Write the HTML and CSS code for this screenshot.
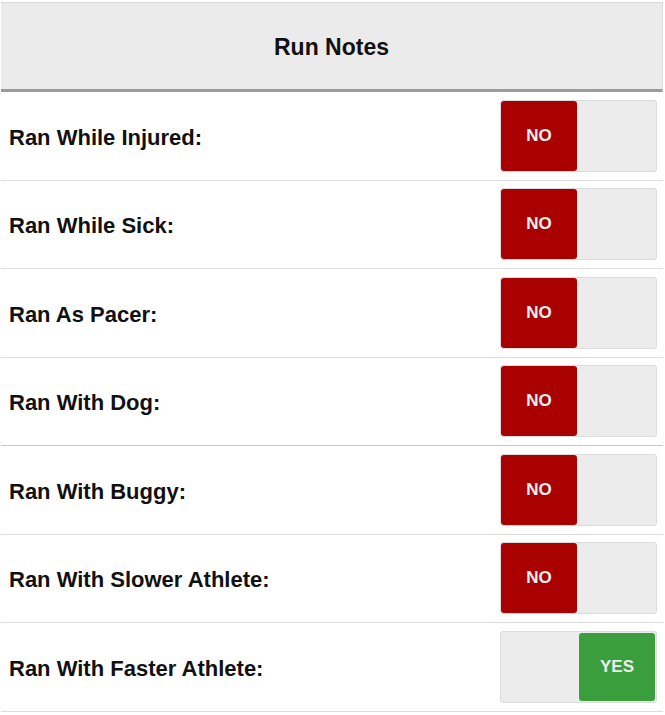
FILE: index.html
```html
<!DOCTYPE html>
<html>
<head>
<meta charset="utf-8">
<link rel="stylesheet" href="styles.css">
</head>
<body>
<div class="page">
  <div class="header">Run Notes</div>
  <div class="row"><span class="label">Ran While Injured:</span><div class="switch"><div class="knob no">NO</div></div></div>
  <div class="row"><span class="label">Ran While Sick:</span><div class="switch"><div class="knob no">NO</div></div></div>
  <div class="row"><span class="label">Ran As Pacer:</span><div class="switch"><div class="knob no">NO</div></div></div>
  <div class="row dark"><span class="label">Ran With Dog:</span><div class="switch"><div class="knob no">NO</div></div></div>
  <div class="row"><span class="label">Ran With Buggy:</span><div class="switch"><div class="knob no">NO</div></div></div>
  <div class="row"><span class="label">Ran With Slower Athlete:</span><div class="switch"><div class="knob no">NO</div></div></div>
  <div class="row"><span class="label">Ran With Faster Athlete:</span><div class="switch on"><div class="knob yes">YES</div></div></div>
</div>
</body>
</html>
```
FILE: styles.css
```css
html, body {
  margin: 0;
  padding: 0;
  background: #fff;
}
body {
  font-family: "Liberation Sans", Arial, sans-serif;
}
.page {
  margin: 2px 2px 0 1px;
}
.header {
  height: 90px;
  box-sizing: border-box;
  padding-top: 3px;
  background: #ebebeb;
  border-top: 1px solid #dadada;
  border-right: 1px solid #dadada;
  border-bottom: 3px solid #9a9a9a;
  display: flex;
  align-items: center;
  justify-content: center;
  font-weight: bold;
  font-size: 23px;
  color: #111;
}
.row {
  height: 88.5px;
  box-sizing: border-box;
  border-bottom: 1px solid #dcdcdc;
  display: flex;
  align-items: center;
  justify-content: space-between;
  padding: 0 6px 0 8px;
}
.row.dark {
  border-bottom-color: #c8c8c8;
}
.label {
  font-weight: bold;
  font-size: 22px;
  color: #111;
  padding-top: 4px;
}
.switch {
  width: 157px;
  height: 72px;
  box-sizing: border-box;
  background: #ececec;
  border: 1px solid #dcdcdc;
  border-radius: 3px;
  display: flex;
  justify-content: flex-start;
}
.switch.on {
  justify-content: flex-end;
}
.knob {
  width: 76px;
  height: 100%;
  border-radius: 3px;
  display: flex;
  align-items: center;
  justify-content: center;
  font-weight: bold;
  font-size: 17px;
  color: #eeeeee;
}
.knob.no {
  background: #a90000;
}
.knob.yes {
  background: #3a9e3c;
  margin-right: 1px;
  margin-top: 1px;
  height: calc(100% - 2px);
}
```
